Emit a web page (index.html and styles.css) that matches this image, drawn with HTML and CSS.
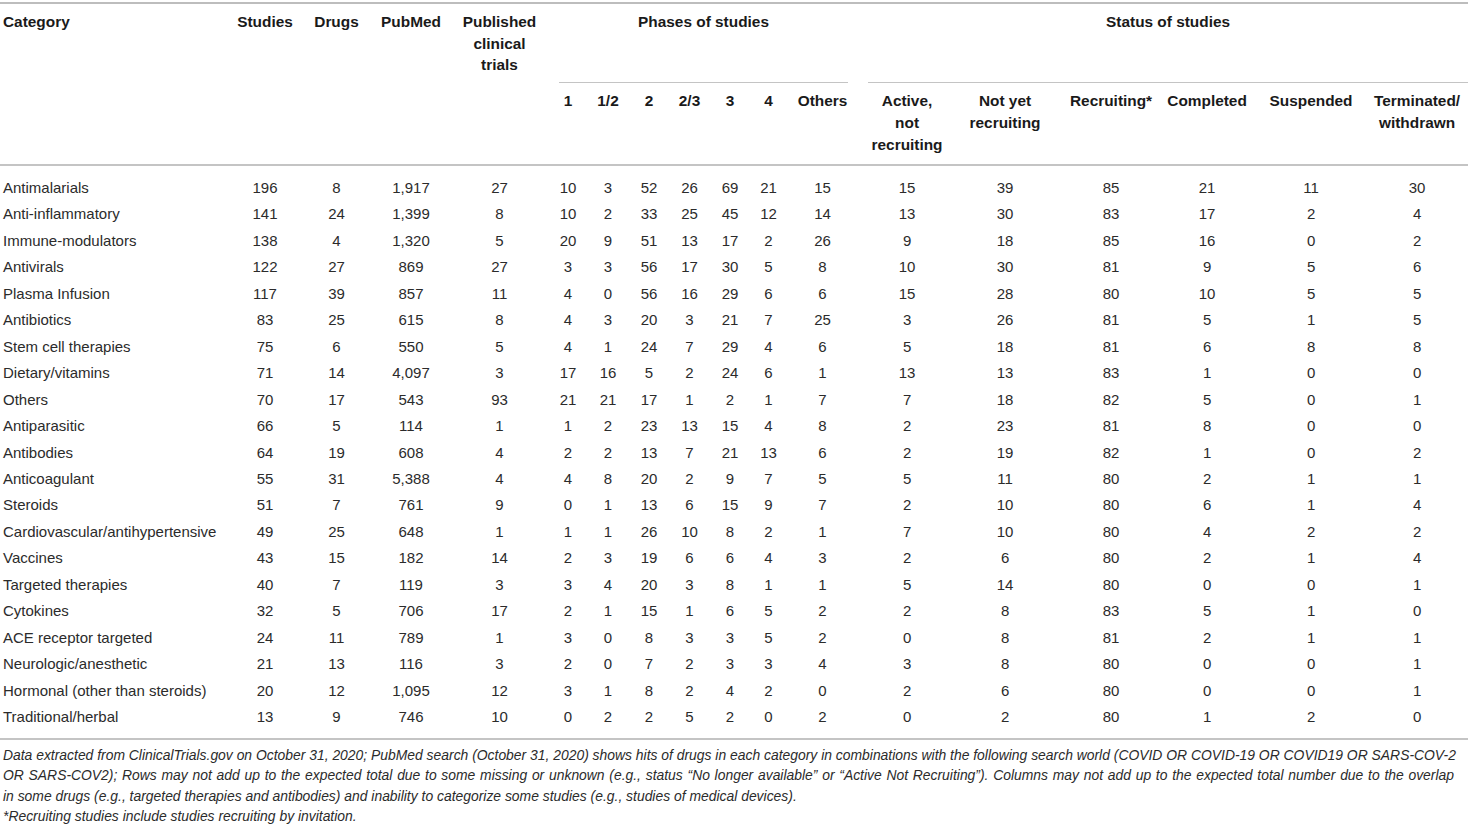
FILE: index.html
```html
<!DOCTYPE html>
<html lang="en">
<head>
<meta charset="utf-8">
<title>Table</title>
<link rel="stylesheet" href="styles.css">
</head>
<body>
<div class="wrap">
<table class="data">
<colgroup>
<col style="width:229px"><col style="width:72px"><col style="width:71px"><col style="width:78px"><col style="width:99px">
<col style="width:38px"><col style="width:42px"><col style="width:40px"><col style="width:41px"><col style="width:40px"><col style="width:37px"><col style="width:71px">
<col style="width:98px"><col style="width:98px"><col style="width:108px"><col style="width:94px"><col style="width:110px"><col style="width:102px">
</colgroup>
<thead>
<tr class="h1">
<th rowspan="2" class="cat">Category</th>
<th rowspan="2">Studies</th>
<th rowspan="2">Drugs</th>
<th rowspan="2">PubMed</th>
<th rowspan="2">Published<br>clinical<br>trials</th>
<th colspan="7" class="group phases"><div class="group-label">Phases of studies</div></th>
<th colspan="6" class="group status"><div class="group-label">Status of studies</div></th>
</tr>
<tr class="h2">
<th>1</th><th>1/2</th><th>2</th><th>2/3</th><th>3</th><th>4</th><th>Others</th>
<th>Active,<br>not<br>recruiting</th>
<th>Not yet<br>recruiting</th>
<th class="rec">Recruiting*</th>
<th class="comp">Completed</th>
<th>Suspended</th>
<th>Terminated/<br>withdrawn</th>
</tr>
</thead>
<tbody>
<tr><td>Antimalarials</td><td>196</td><td>8</td><td>1,917</td><td>27</td><td>10</td><td>3</td><td>52</td><td>26</td><td>69</td><td>21</td><td>15</td><td>15</td><td>39</td><td>85</td><td>21</td><td>11</td><td>30</td></tr>
<tr><td>Anti-inflammatory</td><td>141</td><td>24</td><td>1,399</td><td>8</td><td>10</td><td>2</td><td>33</td><td>25</td><td>45</td><td>12</td><td>14</td><td>13</td><td>30</td><td>83</td><td>17</td><td>2</td><td>4</td></tr>
<tr><td>Immune-modulators</td><td>138</td><td>4</td><td>1,320</td><td>5</td><td>20</td><td>9</td><td>51</td><td>13</td><td>17</td><td>2</td><td>26</td><td>9</td><td>18</td><td>85</td><td>16</td><td>0</td><td>2</td></tr>
<tr><td>Antivirals</td><td>122</td><td>27</td><td>869</td><td>27</td><td>3</td><td>3</td><td>56</td><td>17</td><td>30</td><td>5</td><td>8</td><td>10</td><td>30</td><td>81</td><td>9</td><td>5</td><td>6</td></tr>
<tr><td>Plasma Infusion</td><td>117</td><td>39</td><td>857</td><td>11</td><td>4</td><td>0</td><td>56</td><td>16</td><td>29</td><td>6</td><td>6</td><td>15</td><td>28</td><td>80</td><td>10</td><td>5</td><td>5</td></tr>
<tr><td>Antibiotics</td><td>83</td><td>25</td><td>615</td><td>8</td><td>4</td><td>3</td><td>20</td><td>3</td><td>21</td><td>7</td><td>25</td><td>3</td><td>26</td><td>81</td><td>5</td><td>1</td><td>5</td></tr>
<tr><td>Stem cell therapies</td><td>75</td><td>6</td><td>550</td><td>5</td><td>4</td><td>1</td><td>24</td><td>7</td><td>29</td><td>4</td><td>6</td><td>5</td><td>18</td><td>81</td><td>6</td><td>8</td><td>8</td></tr>
<tr><td>Dietary/vitamins</td><td>71</td><td>14</td><td>4,097</td><td>3</td><td>17</td><td>16</td><td>5</td><td>2</td><td>24</td><td>6</td><td>1</td><td>13</td><td>13</td><td>83</td><td>1</td><td>0</td><td>0</td></tr>
<tr><td>Others</td><td>70</td><td>17</td><td>543</td><td>93</td><td>21</td><td>21</td><td>17</td><td>1</td><td>2</td><td>1</td><td>7</td><td>7</td><td>18</td><td>82</td><td>5</td><td>0</td><td>1</td></tr>
<tr><td>Antiparasitic</td><td>66</td><td>5</td><td>114</td><td>1</td><td>1</td><td>2</td><td>23</td><td>13</td><td>15</td><td>4</td><td>8</td><td>2</td><td>23</td><td>81</td><td>8</td><td>0</td><td>0</td></tr>
<tr><td>Antibodies</td><td>64</td><td>19</td><td>608</td><td>4</td><td>2</td><td>2</td><td>13</td><td>7</td><td>21</td><td>13</td><td>6</td><td>2</td><td>19</td><td>82</td><td>1</td><td>0</td><td>2</td></tr>
<tr><td>Anticoagulant</td><td>55</td><td>31</td><td>5,388</td><td>4</td><td>4</td><td>8</td><td>20</td><td>2</td><td>9</td><td>7</td><td>5</td><td>5</td><td>11</td><td>80</td><td>2</td><td>1</td><td>1</td></tr>
<tr><td>Steroids</td><td>51</td><td>7</td><td>761</td><td>9</td><td>0</td><td>1</td><td>13</td><td>6</td><td>15</td><td>9</td><td>7</td><td>2</td><td>10</td><td>80</td><td>6</td><td>1</td><td>4</td></tr>
<tr><td>Cardiovascular/antihypertensive</td><td>49</td><td>25</td><td>648</td><td>1</td><td>1</td><td>1</td><td>26</td><td>10</td><td>8</td><td>2</td><td>1</td><td>7</td><td>10</td><td>80</td><td>4</td><td>2</td><td>2</td></tr>
<tr><td>Vaccines</td><td>43</td><td>15</td><td>182</td><td>14</td><td>2</td><td>3</td><td>19</td><td>6</td><td>6</td><td>4</td><td>3</td><td>2</td><td>6</td><td>80</td><td>2</td><td>1</td><td>4</td></tr>
<tr><td>Targeted therapies</td><td>40</td><td>7</td><td>119</td><td>3</td><td>3</td><td>4</td><td>20</td><td>3</td><td>8</td><td>1</td><td>1</td><td>5</td><td>14</td><td>80</td><td>0</td><td>0</td><td>1</td></tr>
<tr><td>Cytokines</td><td>32</td><td>5</td><td>706</td><td>17</td><td>2</td><td>1</td><td>15</td><td>1</td><td>6</td><td>5</td><td>2</td><td>2</td><td>8</td><td>83</td><td>5</td><td>1</td><td>0</td></tr>
<tr><td>ACE receptor targeted</td><td>24</td><td>11</td><td>789</td><td>1</td><td>3</td><td>0</td><td>8</td><td>3</td><td>3</td><td>5</td><td>2</td><td>0</td><td>8</td><td>81</td><td>2</td><td>1</td><td>1</td></tr>
<tr><td>Neurologic/anesthetic</td><td>21</td><td>13</td><td>116</td><td>3</td><td>2</td><td>0</td><td>7</td><td>2</td><td>3</td><td>3</td><td>4</td><td>3</td><td>8</td><td>80</td><td>0</td><td>0</td><td>1</td></tr>
<tr><td>Hormonal (other than steroids)</td><td>20</td><td>12</td><td>1,095</td><td>12</td><td>3</td><td>1</td><td>8</td><td>2</td><td>4</td><td>2</td><td>0</td><td>2</td><td>6</td><td>80</td><td>0</td><td>0</td><td>1</td></tr>
<tr><td>Traditional/herbal</td><td>13</td><td>9</td><td>746</td><td>10</td><td>0</td><td>2</td><td>2</td><td>5</td><td>2</td><td>0</td><td>2</td><td>0</td><td>2</td><td>80</td><td>1</td><td>2</td><td>0</td></tr>
</tbody>
</table>
<div class="notes">
<p class="just">Data extracted from ClinicalTrials.gov on October 31, 2020; PubMed search (October 31, 2020) shows hits of drugs in each category in combinations with the following search world (COVID OR COVID-19 OR COVID19 OR SARS-COV-2</p>
<p class="just">OR SARS-COV2); Rows may not add up to the expected total due to some missing or unknown (e.g., status “No longer available” or “Active Not Recruiting”). Columns may not add up to the expected total number due to the overlap</p>
<p>in some drugs (e.g., targeted therapies and antibodies) and inability to categorize some studies (e.g., studies of medical devices).</p>
<p>*Recruiting studies include studies recruiting by invitation.</p>
</div>
</div>
</body>
</html>
```
FILE: styles.css
```css
html, body {
  margin: 0;
  padding: 0;
  background: #ffffff;
}

body {
  font-family: "Liberation Sans", Arial, sans-serif;
  color: #2b2b2b;
}

.wrap {
  width: 1468px;
  padding-top: 2px;
}

.data {
  width: 1468px;
  table-layout: fixed;
  border-collapse: collapse;
  font-size: 15px;
}

.data thead {
  border-top: 2px solid #bdbdbd;
}

.data th {
  font-weight: bold;
  font-size: 15.4px;
  color: #1a1a1a;
  text-align: center;
  vertical-align: top;
  line-height: 21.5px;
  padding: 0;
  white-space: nowrap;
}

.data .h1 th {
  padding-top: 7px;
}

.data .h1 th.cat {
  text-align: left;
  padding-left: 3px;
}

.data .h1 th.group {
  padding: 0 10px;
}

.data .h1 th.status {
  padding: 0 0 0 10px;
}

.group-label {
  height: 79px;
  box-sizing: border-box;
  padding-top: 7px;
  border-bottom: 1px solid #c4c4c4;
}

.data .h2 th {
  height: 82px;
  padding-top: 7px;
  line-height: 22px;
  box-sizing: border-box;
}

.data th.rec {
  padding-left: 6px;
}

.data th.comp {
  padding-right: 4px;
}

.data tbody {
  border-top: 2px solid #c4c4c4;
  border-bottom: 2px solid #c4c4c4;
}

.data td {
  padding: 0;
  height: 26.45px;
  line-height: 26.45px;
  text-align: center;
  white-space: nowrap;
}

.data td:first-child {
  text-align: left;
  padding-left: 3px;
}

.data td:nth-child(15) {
  padding-left: 6px;
}

.data td:nth-child(16) {
  padding-right: 4px;
}

.data tbody tr:first-child td {
  padding-top: 9px;
}

.data tbody tr:last-child td {
  padding-bottom: 7px;
}

.notes {
  width: 1451px;
  padding: 5px 0 0 3px;
  font-style: italic;
  font-size: 13.9px;
  line-height: 20.5px;
  color: #2b2b2b;
}

.notes p {
  margin: 0;
  white-space: nowrap;
}

.notes p.just {
  text-align: justify;
  text-align-last: justify;
}
```
